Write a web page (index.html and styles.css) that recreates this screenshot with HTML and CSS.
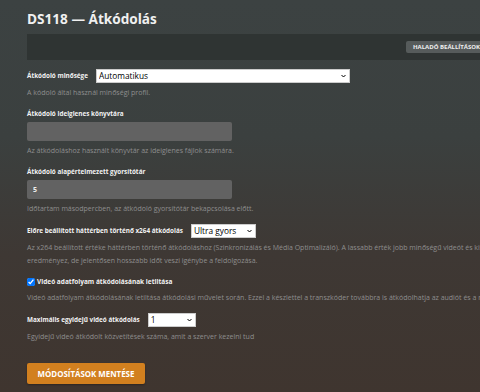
FILE: index.html
```html
<!DOCTYPE html>
<html lang="hu">
<head>
    <meta charset="UTF-8">
    <meta name="viewport" content="width=device-width, initial-scale=1.0">
    <title>DS118 — Átkódolás</title>
    <link rel="stylesheet" href="styles.css">
</head>
<body>
    <div class="page">
        <h1>DS118 — Átkódolás</h1>

        <div class="toolbar">
            <button class="advanced-btn">Haladó beállítások</button>
        </div>

        <div class="field inline first">
            <label for="quality">Átkódoló minősége</label>
            <div class="select-wrap wide">
                <select id="quality">
                    <option>Automatikus</option>
                </select>
                <svg class="chevron" viewBox="0 0 10 6"><path d="M1 1l4 4 4-4" fill="none" stroke="#000" stroke-width="2"/></svg>
            </div>
        </div>
        <p class="help">A kódoló által használ minőségi profil.</p>

        <div class="field">
            <label for="tempdir">Átkódoló ideiglenes könyvtára</label>
            <input type="text" id="tempdir" value="">
        </div>
        <p class="help">Az átkódoláshoz használt könyvtár az ideiglenes fájlok számára.</p>

        <div class="field">
            <label for="throttle">Átkódoló alapértelmezett gyorsítótár</label>
            <input type="text" id="throttle" value="5">
        </div>
        <p class="help">Időtartam másodpercben, az átkódoló gyorsítótár bekapcsolása előtt.</p>

        <div class="field inline">
            <label for="preset">Előre beállított háttérben történő x264 átkódolás</label>
            <div class="select-wrap medium">
                <select id="preset">
                    <option>Ultra gyors</option>
                </select>
                <svg class="chevron" viewBox="0 0 10 6"><path d="M1 1l4 4 4-4" fill="none" stroke="#000" stroke-width="2"/></svg>
            </div>
        </div>
        <p class="help">Az x264 beállított értéke háttérben történő átkódoláshoz (Szinkronizálás és Média Optimalizáló). A lassabb érték jobb minőségű videót és kisebb fájlméretet eredményez, de jelentősen hosszabb időt veszi igénybe a feldolgozása.</p>

        <div class="field check">
            <input type="checkbox" id="novideo" checked>
            <label for="novideo">Videó adatfolyam átkódolásának letiltása</label>
        </div>
        <p class="help nowrap">Videó adatfolyam átkódolásának letiltása átkódolási művelet során. Ezzel a készlettel a transzkóder továbbra is átkódolhatja az audiót és a remuxot.</p>

        <div class="field inline">
            <label for="maxjobs">Maximális egyidejű videó átkódolás</label>
            <div class="select-wrap small">
                <select id="maxjobs">
                    <option>1</option>
                </select>
                <svg class="chevron" viewBox="0 0 10 6"><path d="M1 1l4 4 4-4" fill="none" stroke="#000" stroke-width="2"/></svg>
            </div>
        </div>
        <p class="help">Egyidejű videó átkódolt közvetítések száma, amit a szerver kezelni tud</p>

        <button class="save-btn">Módosítások mentése</button>
    </div>
</body>
</html>
```

FILE: styles.css
```css
html {
    overflow: hidden;
}
body {
    margin: 0;
    padding: 0;
    height: 392px;
    font-family: 'Open Sans', sans-serif;
    color: #eee;
    background: linear-gradient(to bottom, #3c4242 0%, #3b403f 35%, #3e3834 65%, #3f352f 100%);
}
.page {
    width: 510px;
    padding: 9px 27px 0;
}
h1 {
    margin: 0;
    font-size: 13.6px;
    font-weight: 700;
    line-height: 20px;
    color: #f0f0f0;
}
.toolbar {
    margin-top: 5px;
    height: 26px;
    background-color: #2f3433;
    display: flex;
    align-items: center;
    justify-content: flex-end;
    padding-right: 50px;
}
.advanced-btn {
    font-family: 'Open Sans', sans-serif;
    font-size: 6px;
    font-weight: 700;
    text-transform: uppercase;
    color: #eee;
    background-color: #565b5b;
    border: none;
    border-radius: 2px;
    padding: 0 7px;
    height: 12px;
    line-height: 12px;
}
.field {
    margin-top: 10px;
}
.field label {
    display: block;
    font-size: 6.35px;
    font-weight: 700;
    color: #f2f2f2;
    line-height: 10px;
}
.field.inline {
    display: flex;
    align-items: center;
    margin-top: 9px;
    height: 14px;
}
.field.inline label {
    margin-right: 8px;
}
.field.check {
    display: flex;
    align-items: center;
    margin-top: 9px;
    height: 12px;
}
.field.check label {
    margin-left: 2px;
    font-size: 6.5px;
}
.field.check input {
    margin: 0;
    width: 8px;
    height: 8px;
}
.field input[type="text"] {
    display: block;
    width: 205px;
    height: 19px;
    box-sizing: border-box;
    margin-top: 3px;
    border: none;
    border-radius: 2px;
    background-color: #626262;
    color: #eee;
    font-family: 'Open Sans', sans-serif;
    font-size: 7px;
    font-weight: 700;
    padding: 0 6px;
}
.select-wrap {
    position: relative;
    height: 14px;
}
.select-wrap.wide { width: 254px; }
.select-wrap.medium { width: 65px; }
.select-wrap.small { width: 48px; }
.select-wrap select {
    display: block;
    appearance: none;
    width: 100%;
    height: 14px;
    margin: 0;
    border: 1px solid #ccc;
    border-radius: 0;
    background-color: #fff;
    color: #000;
    font-family: 'Open Sans', sans-serif;
    font-size: 8.3px;
    line-height: 12px;
    padding: 0 2px;
}
.chevron {
    position: absolute;
    right: 4px;
    top: 5px;
    width: 5px;
    height: 4px;
}
.help {
    margin: 3px 0 0;
    font-size: 7px;
    line-height: 13px;
    color: #8e8e8e;
}
.help.nowrap {
    white-space: nowrap;
}
.save-btn {
    display: block;
    margin-top: 20px;
    width: 118px;
    height: 21px;
    border: none;
    border-radius: 2px;
    background-color: #d2801f;
    color: #fff;
    font-family: 'Open Sans', sans-serif;
    font-size: 7.9px;
    font-weight: 700;
    text-transform: uppercase;
    box-shadow: 0 1px 2px rgba(0, 0, 0, 0.3);
}
```
